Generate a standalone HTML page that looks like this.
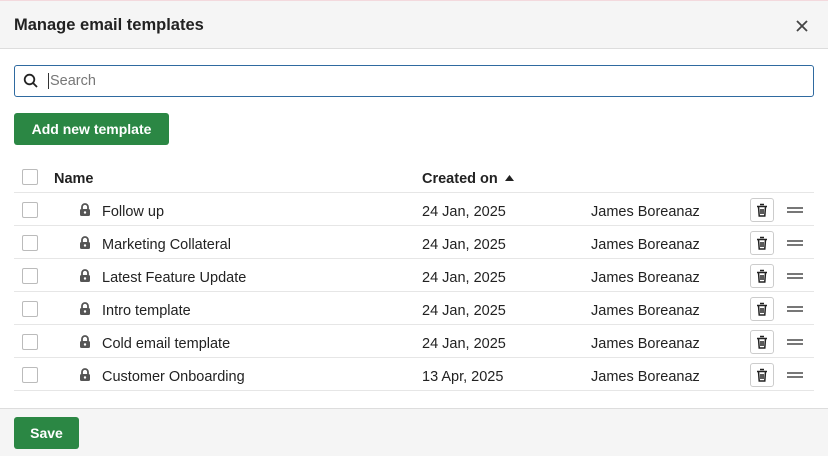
<!DOCTYPE html><html><head><style>
*{margin:0;padding:0;box-sizing:border-box}
body{width:828px;height:456px;font-family:"Liberation Sans",Arial,sans-serif;color:#222;background:#fff;position:relative;overflow:hidden;font-size:14px}
.hdr{position:absolute;left:0;top:0;width:828px;height:49px;background:#f5f5f5;border-bottom:1px solid #ddd;border-top:1px solid #f3d9dd}
.hdr h1{position:absolute;left:14px;top:15px;font-size:16.5px;font-weight:bold;color:#222}
.search{position:absolute;left:14px;top:65px;width:800px;height:32px;border:1px solid #2f6aa0;border-radius:3px}
.search span{position:absolute;left:33px;top:7px;color:#777;font-size:14.5px;border-left:1px solid #333;padding-left:1px}
.btn{position:absolute;background:#2b8744;color:#fff;font-weight:bold;border-radius:3px;font-size:14px;text-align:center}
.cb{position:absolute;left:22px;width:16px;height:16px;border:1.5px solid #bbb;border-radius:2px;background:#fff}
.row{position:absolute;left:14px;width:800px;height:33px;border-bottom:1px solid #e6e6e6}
.t{position:absolute;font-size:14.5px;color:#222}
.trash{position:absolute;left:750px;width:24px;height:24px;border:1px solid #ccc;border-radius:3px;background:#fff}
.eq{position:absolute;left:787px;width:16px;height:6px;border-top:2px solid #777;border-bottom:2px solid #777}
.ftr{position:absolute;left:0;top:408px;width:828px;height:48px;background:#f5f5f5;border-top:1px solid #ddd}
</style></head><body>
<div class="hdr"><h1>Manage email templates</h1><svg style="position:absolute;left:796px;top:19px" width="12" height="12" viewBox="0 0 12 12"><path d="M1 1l10 10M11 1L1 11" stroke="#444" stroke-width="1.8"/></svg></div>
<div class="search"><svg style="position:absolute;left:8px;top:7px" width="16" height="16" viewBox="0 0 16 16"><circle cx="6.5" cy="6.5" r="4.8" fill="none" stroke="#222" stroke-width="1.8"/><path d="M10 10l4 4" stroke="#222" stroke-width="1.8"/></svg><span>Search</span></div>
<div class="btn" style="left:14px;top:113px;width:155px;height:32px;line-height:32px">Add new template</div>
<div class="row" style="top:160px"></div>
<div class="cb" style="top:169px"></div>
<div class="t" style="left:54px;top:171px;font-weight:bold">Name</div>
<div class="t" style="left:422px;top:171px;font-weight:bold">Created on</div>
<svg style="position:absolute;left:505px;top:175px" width="9" height="6" viewBox="0 0 9 6"><path d="M0 6L4.5 0L9 6z" fill="#222"/></svg>
<div id="rows"></div>
<div class="ftr"><div class="btn" style="left:14px;top:8px;width:65px;height:32px;line-height:32px">Save</div></div>
<script>
var d=[["Follow up","24 Jan, 2025"],["Marketing Collateral","24 Jan, 2025"],["Latest Feature Update","24 Jan, 2025"],["Intro template","24 Jan, 2025"],["Cold email template","24 Jan, 2025"],["Customer Onboarding","13 Apr, 2025"]];
var h="";
d.forEach(function(r,i){var y=193+i*33;
h+='<div class="row" style="top:'+y+'px"></div><div class="cb" style="top:'+(y+9)+'px"></div>'+
'<svg style="position:absolute;left:79px;top:'+(y+10)+'px" width="12" height="13" viewBox="0 0 12 13"><path d="M3 6V4a3 3 0 0 1 6 0v2" fill="none" stroke="#555" stroke-width="1.8"/><rect x="1" y="6" width="10" height="7" rx="1.5" fill="#555"/><circle cx="6" cy="9.5" r="1.2" fill="#fff"/></svg>'+
'<div class="t" style="left:102px;top:'+(y+11)+'px">'+r[0]+'</div><div class="t" style="left:422px;top:'+(y+11)+'px">'+r[1]+'</div><div class="t" style="left:591px;top:'+(y+11)+'px">James Boreanaz</div>'+
'<div class="trash" style="top:'+(y+5)+'px"><svg style="position:absolute;left:5px;top:4px" width="12" height="14" viewBox="0 0 12 14"><path d="M4 1.5h4M1 3.5h10M2.5 3.5l.7 9.5h5.6l.7-9.5M5 6v5M7 6v5" fill="none" stroke="#222" stroke-width="1.5"/></svg></div>'+
'<div class="eq" style="top:'+(y+14)+'px"></div>';});
document.getElementById("rows").innerHTML=h;
</script>
</body></html>
